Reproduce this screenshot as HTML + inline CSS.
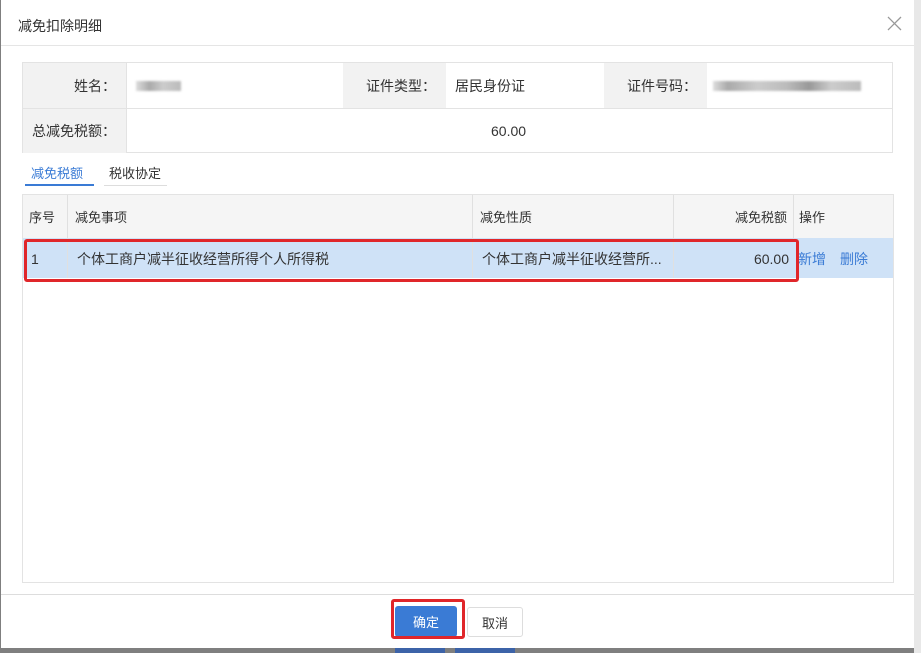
<!DOCTYPE html><html><head><meta charset="utf-8"><style>
body{margin:0;width:921px;height:653px;background:#7f7f7f;position:relative;overflow:hidden;font-family:"Liberation Sans","Noto Sans CJK SC",sans-serif;font-size:14px;color:#333}
.a{position:absolute}
.dlg{left:1px;top:0;width:913px;height:648px;background:#fff}
.lab{background:#f2f2f2;text-align:right;box-sizing:border-box;padding-right:10px}
.c{position:absolute;display:flex;align-items:center;box-sizing:border-box}
</style></head><body>
<div class="a" style="left:914px;top:0;width:7px;height:653px;background:#e8e8e8"></div>
<div class="a" style="left:395px;top:648px;width:50px;height:5px;background:#3c63a8"></div>
<div class="a" style="left:455px;top:648px;width:60px;height:5px;background:#3c63a8"></div>
<div class="a dlg">
<div class="a" style="left:17px;top:16px;font-size:14px;color:#333">减免扣除明细</div>
<svg class="a" style="left:886px;top:16px" width="15" height="15"><path d="M1 1L14 14M14 1L1 14" stroke="#999" stroke-width="1.3"/></svg>
<div class="a" style="left:0;top:45px;width:913px;height:1px;background:#e5e5e5"></div>
<!-- info table -->
<div class="a" style="left:21px;top:62px;width:871px;height:91px;border:1px solid #e3e3e3;box-sizing:border-box"></div>
<div class="c lab" style="left:22px;top:63px;width:103px;height:45px;justify-content:flex-end">姓名：</div>
<div class="c" style="left:135px;top:63px;height:45px"><span style="display:inline-block;width:45px;height:10px;background:linear-gradient(90deg,#ddd,#aaa 30%,#ccc 60%,#bbb);filter:blur(1px)"></span></div>
<div class="c lab" style="left:342px;top:63px;width:103px;height:45px;justify-content:flex-end">证件类型：</div>
<div class="c" style="left:454px;top:63px;height:45px">居民身份证</div>
<div class="c lab" style="left:603px;top:63px;width:103px;height:45px;justify-content:flex-end">证件号码：</div>
<div class="c" style="left:712px;top:63px;height:45px"><span style="display:inline-block;width:148px;height:10px;background:linear-gradient(90deg,#ddd,#aaa 10%,#ccc 30%,#bbb 50%,#999 65%,#ccc 80%,#bbb);filter:blur(1px)"></span></div>
<div class="a" style="left:22px;top:108px;width:870px;height:1px;background:#e3e3e3"></div>
<div class="c lab" style="left:22px;top:109px;width:103px;height:44px;justify-content:flex-end">总减免税额：</div>
<div class="a" style="left:125px;top:63px;width:1px;height:90px;background:#e3e3e3"></div>
<div class="c" style="left:490px;top:109px;height:44px">60.00</div>
<!-- tabs -->
<div class="a" style="left:30px;top:163px;color:#3a7bd5;font-size:13px">减免税额</div>
<div class="a" style="left:24px;top:184px;width:69px;height:2px;background:#3a7bd5"></div>
<div class="a" style="left:108px;top:163px;font-size:13px">税收协定</div>
<div class="a" style="left:103px;top:185px;width:63px;height:1px;background:#ddd"></div>
<!-- table -->
<div class="a" style="left:21px;top:194px;width:872px;height:389px;border:1px solid #e3e3e3;box-sizing:border-box"></div>
<div class="a" style="left:22px;top:195px;width:870px;height:43px;background:#f5f5f5"></div>
<div class="a" style="left:22px;top:238px;width:870px;height:40px;background:#cfe2f7"></div>
<div class="a" style="left:66px;top:195px;width:1px;height:83px;background:#e0e0e0"></div>
<div class="a" style="left:471px;top:195px;width:1px;height:83px;background:#e0e0e0"></div>
<div class="a" style="left:672px;top:195px;width:1px;height:83px;background:#e0e0e0"></div>
<div class="a" style="left:792px;top:195px;width:1px;height:43px;background:#e0e0e0"></div>
<div class="c" style="left:28px;top:195px;height:43px;font-size:13px">序号</div>
<div class="c" style="left:74px;top:195px;height:43px;font-size:13px">减免事项</div>
<div class="c" style="left:479px;top:195px;height:43px;font-size:13px">减免性质</div>
<div class="c" style="left:672px;top:195px;width:114px;height:43px;justify-content:flex-end;font-size:13px">减免税额</div>
<div class="c" style="left:798px;top:195px;height:43px;font-size:13px">操作</div>
<div class="c" style="left:30px;top:238px;height:42px">1</div>
<div class="c" style="left:76px;top:238px;height:42px">个体工商户减半征收经营所得个人所得税</div>
<div class="c" style="left:481px;top:238px;height:42px">个体工商户减半征收经营所...</div>
<div class="c" style="left:672px;top:238px;width:116px;height:42px;justify-content:flex-end">60.00</div>
<div class="c" style="left:797px;top:238px;height:42px;color:#3a7bd5">新增<span style="margin-left:14px">删除</span></div>
<div class="a" style="left:23px;top:239px;width:775px;height:43px;border:3px solid #e0262a;border-radius:3px;box-sizing:border-box"></div>
<!-- footer -->
<div class="a" style="left:0;top:594px;width:913px;height:1px;background:#ddd"></div>
<div class="c" style="left:394px;top:606px;width:62px;height:31px;background:#3a7bd5;color:#fff;border-radius:3px;justify-content:center;font-size:13px">确定</div>
<div class="a" style="left:390px;top:599px;width:74px;height:40px;border:3px solid #e0262a;border-radius:3px;box-sizing:border-box"></div>
<div class="c" style="left:466px;top:607px;width:56px;height:30px;border:1px solid #ddd;border-radius:3px;justify-content:center;font-size:13px">取消</div>
</div>
</body></html>
